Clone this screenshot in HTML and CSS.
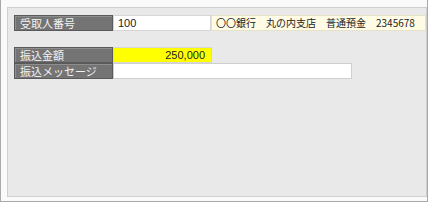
FILE: index.html
```html
<!DOCTYPE html>
<html lang="ja">
<head>
<meta charset="utf-8">
<link rel="stylesheet" href="styles.css">
</head>
<body>
<div class="frame">
  <div class="panel">
    <div class="row">
      <div class="label">受取人番号</div>
      <div class="cell value">100</div>
      <div class="cell bank">〇〇銀行　丸の内支店　普通預金　2345678</div>
    </div>
    <div class="group">
      <div class="row">
        <div class="label">振込金額</div>
        <div class="cell amount">250,000</div>
      </div>
      <div class="row">
        <div class="label">振込メッセージ</div>
        <div class="cell message"></div>
      </div>
    </div>
  </div>
</div>
</body>
</html>
```
FILE: styles.css
```css
* { box-sizing: border-box; }
html, body { margin: 0; padding: 0; }
body {
  width: 428px;
  height: 202px;
  overflow: hidden;
  font-family: "Noto Sans CJK JP", "Noto Sans", sans-serif;
  font-size: 11px;
  color: #222;
}
.frame {
  width: 428px;
  height: 202px;
  background: #fafafa;
  border-left: 1px solid #a9a9a9;
  border-right: 1px solid #a9a9a9;
  border-bottom: 1px solid #a9a9a9;
  padding: 7px 0 4px 6px;
  display: flex;
}
.panel {
  flex: 1;
  background: #e9e9e9;
  border: 1px solid #cfcfcf;
  padding: 7px 0 0 6px;
  display: flex;
  flex-direction: column;
  gap: 16px;
}
.group { display: flex; flex-direction: column; }
.row {
  display: flex;
  height: 16px;
}
.label {
  width: 99px;
  height: 16px;
  background: #747474;
  border: 1px solid #5a5a5a;
  box-shadow: inset 1px 1px 0 #8e8e8e;
  color: #f2f2f2;
  padding-left: 5px;
  line-height: 14px;
  white-space: nowrap;
}
.cell {
  height: 16px;
  line-height: 14px;
  border: 1px solid #d6d6d6;
  white-space: nowrap;
}
.value {
  width: 98px;
  background: #fff;
  padding-left: 4px;
  font-family: "Liberation Sans", Arial, sans-serif;
  font-size: 11px;
}
.bank {
  flex: 1;
  background: #fffbe4;
  border-color: #e6e2c8;
  padding-left: 4px;
  font-size: 10px;
  overflow: hidden;
}
.amount {
  width: 99px;
  background: #ffff00;
  text-align: right;
  padding-right: 6px;
  font-family: "Liberation Sans", Arial, sans-serif;
  font-size: 11px;
}
.message {
  width: 239px;
  background: #fff;
  border-color: #cfcfcf;
}
```
